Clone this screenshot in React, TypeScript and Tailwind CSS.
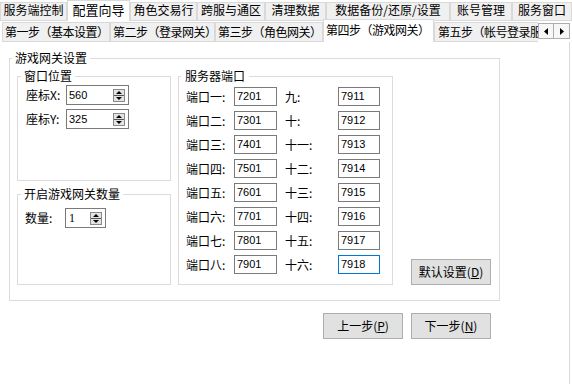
import React from "react";

type T = { label: string; w: string; sel?: boolean };

const row1: T[] = [
  { label: "服务端控制", w: "w-[67px]" },
  { label: "配置向导", w: "w-[63px]", sel: true },
  { label: "角色交易行", w: "w-[67px]" },
  { label: "跨服与通区", w: "w-[68px]" },
  { label: "清理数据", w: "w-[61px]" },
  { label: "数据备份/还原/设置", w: "w-[124px]" },
  { label: "账号管理", w: "w-[62px]" },
  { label: "服务窗口", w: "w-[60px]" },
];

const row2: T[] = [
  { label: "第一步（基本设置）", w: "w-[108px]" },
  { label: "第二步（登录网关）", w: "w-[105px]" },
  { label: "第三步（角色网关）", w: "w-[108px]" },
  { label: "第四步（游戏网关）", w: "w-[111px]", sel: true },
];

const ports: [string, string, string, string][] = [
  ["端口一:", "7201", "九:", "7911"],
  ["端口二:", "7301", "十:", "7912"],
  ["端口三:", "7401", "十一:", "7913"],
  ["端口四:", "7501", "十二:", "7914"],
  ["端口五:", "7601", "十三:", "7915"],
  ["端口六:", "7701", "十四:", "7916"],
  ["端口七:", "7801", "十五:", "7917"],
  ["端口八:", "7901", "十六:", "7918"],
];

function Spin() {
  return (
    <svg width="12" height="13" viewBox="0 0 12 13" className="shrink-0">
      <rect x="0.5" y="0.5" width="11" height="12" fill="#e3e3e3" stroke="#8a8a8a" />
      <line x1="1" y1="6.5" x2="11" y2="6.5" stroke="#555" strokeWidth="1" />
      <path d="M3 5 L6 2 L9 5 Z" fill="#000" />
      <path d="M3 8 L9 8 L6 11 Z" fill="#000" />
    </svg>
  );
}

function Group({
  title,
  className,
  titleClass,
  children,
}: {
  title: string;
  className: string;
  titleClass: string;
  children?: React.ReactNode;
}) {
  return (
    <div className={`border border-[#dcdcdc] ${className}`}>
      <div className={`-mt-[8px] h-[14px] w-fit whitespace-nowrap bg-white leading-[14px] ${titleClass}`}>{title}</div>
      {children}
    </div>
  );
}

function PortBox({ value, w, focus }: { value: string; w: string; focus?: boolean }) {
  return (
    <div
      className={`h-[19px] ${w} border ${focus ? "border-[#0078d7]" : "border-[#7a7a7a]"} bg-white pl-[2px] font-['Liberation_Sans',sans-serif] text-[11px] leading-[16px]`}
    >
      {value}
    </div>
  );
}

function Btn({ text, key2 }: { text: string; key2: string }) {
  return (
    <div className="flex h-[26px] w-[80px] items-center justify-center border border-[#adadad] bg-[#e1e1e1] leading-[14px]">
      {text}(<span className="underline underline-offset-[1px]">{key2}</span>)
    </div>
  );
}

export default function App() {
  return (
    <div className="relative h-[384px] w-[572px] overflow-hidden bg-white font-['Noto_Sans_CJK_SC','Noto_Sans',sans-serif] text-[12px] text-black">
      {/* top tab row */}
      <div className="flex h-[21px] items-end">
        {row1.map((t) =>
          t.sel ? (
            <div
              key={t.label}
              className={`${t.w} h-[21px] shrink-0 whitespace-nowrap border border-b-0 border-[#d9d9d9] bg-white pt-[2px] text-center text-[13px] leading-[13px]`}
            >
              {t.label}
            </div>
          ) : (
            <div
              key={t.label}
              className={`${t.w} h-[19px] shrink-0 whitespace-nowrap border border-[#d9d9d9] bg-[#f0f0f0] text-center leading-[14px]`}
            >
              {t.label}
            </div>
          )
        )}
      </div>
      {/* second tab row */}
      <div className="flex h-[21px] items-end pl-[2px]">
        {row2.map((t) =>
          t.sel ? (
            <div
              key={t.label}
              className={`${t.w} h-[23px] shrink-0 whitespace-nowrap border border-b-0 border-[#d9d9d9] bg-white pl-[2px] pt-[2px] leading-[16px] tracking-[-0.5px]`}
            >
              {t.label}
            </div>
          ) : (
            <div
              key={t.label}
              className={`${t.w} h-[20px] shrink-0 whitespace-nowrap border border-[#d9d9d9] bg-[#f0f0f0] pl-[2px] pt-[1px] leading-[16px] tracking-[-0.5px]`}
            >
              {t.label}
            </div>
          )
        )}
        <div className="h-[20px] w-[104px] shrink-0 overflow-hidden whitespace-nowrap border border-r-0 border-[#d9d9d9] bg-[#f0f0f0] pl-[3px] pt-[1px] leading-[16px] tracking-[-0.5px]">
          第五步（帐号登录服
        </div>
        <div className="mb-[3px] flex shrink-0 self-end">
          <div className="flex h-[16px] w-[16px] items-center justify-center border border-[#adadad] bg-[#f7f7f7]">
            <svg width="4" height="7" viewBox="0 0 4 7">
              <path d="M4 0 L0 3.5 L4 7 Z" fill="#000" />
            </svg>
          </div>
          <div className="flex h-[16px] w-[16px] items-center justify-center border border-l-0 border-[#adadad] bg-[#f7f7f7]">
            <svg width="4" height="7" viewBox="0 0 4 7">
              <path d="M0 0 L4 3.5 L0 7 Z" fill="#000" />
            </svg>
          </div>
        </div>
      </div>
      {/* page */}
      <div className="h-[342px] w-[570px] border-r border-[#d9d9d9] pt-[16px]">
        <Group title="游戏网关设置" className="ml-[9px] h-[243px] w-[491px]" titleClass="ml-[2px] px-[3px]">
          <div className="mt-[11px] flex pl-[7px]">
            <div className="flex w-[154px] flex-col">
              <Group title="窗口位置" className="h-[105px]" titleClass="ml-[3px] px-[3px]">
                <div className="mt-[2px] flex flex-col gap-[4px] pl-[8px]">
                  {[
                    ["座标X:", "560"],
                    ["座标Y:", "325"],
                  ].map(([l, v]) => (
                    <div key={l} className="flex items-center">
                      <div className="w-[40px] leading-[14px]">{l}</div>
                      <div className="flex h-[20px] w-[63px] items-center justify-between border border-[#7a7a7a] pl-[2px] pr-[3px] font-['Liberation_Sans',sans-serif] text-[11px]">
                        <span className="leading-[14px]">{v}</span>
                        <Spin />
                      </div>
                    </div>
                  ))}
                </div>
              </Group>
              <Group title="开启游戏网关数量" className="mt-[13px] h-[91px]" titleClass="ml-[3px] px-[3px]">
                <div className="mt-[7px] flex items-center pl-[7px]">
                  <div className="w-[40px] leading-[14px]">数量:</div>
                  <div className="flex h-[20px] w-[41px] items-center justify-between border border-[#7a7a7a] pl-[3px] pr-[3px] font-['Liberation_Serif',serif] text-[12px]">
                    <span className="leading-[14px]">1</span>
                    <Spin />
                  </div>
                </div>
              </Group>
            </div>
            <Group title="服务器端口" className="ml-[7px] h-[209px] w-[215px]" titleClass="ml-[2px] px-[4px]">
              <div className="mt-[4px] flex flex-col gap-[5px] pl-[7px]">
                {ports.map(([l1, v1, l2, v2]) => (
                  <div key={l1} className="flex items-center">
                    <div className="w-[48px] leading-[14px]">{l1}</div>
                    <PortBox value={v1} w="w-[43px]" />
                    <div className="ml-[8px] w-[53px] leading-[14px]">{l2}</div>
                    <PortBox value={v2} w="w-[42px]" focus={v2 === "7918"} />
                  </div>
                ))}
              </div>
            </Group>
            <div className="ml-[18px] self-end">
              <Btn text="默认设置" key2="D" />
            </div>
          </div>
        </Group>
        <div className="ml-[323px] mt-[12px] flex gap-[8px]">
          <Btn text="上一步" key2="P" />
          <Btn text="下一步" key2="N" />
        </div>
      </div>
    </div>
  );
}
